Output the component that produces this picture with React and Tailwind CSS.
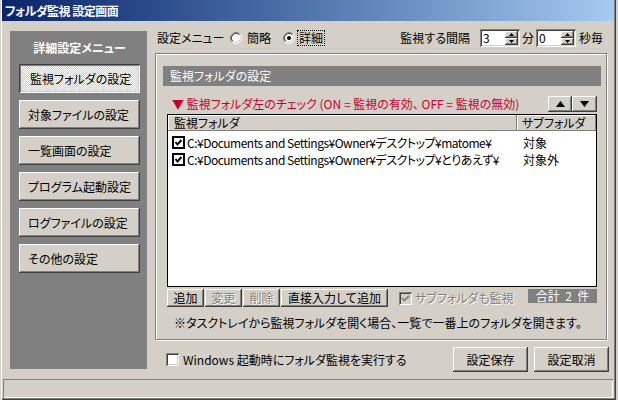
import React from "react";

const raised =
  "bg-[#d4d0c8] shadow-[inset_-1px_-1px_#404040,inset_1px_1px_#fff,inset_-2px_-2px_#808080,inset_2px_2px_#d4d0c8]";
const pressed =
  "bg-[repeating-conic-gradient(#ffffff_0%_25%,#d4d0c8_0%_50%)] bg-[length:2px_2px] shadow-[inset_1px_1px_#404040,inset_-1px_-1px_#fff,inset_2px_2px_#808080,inset_-2px_-2px_#d4d0c8]";
const sunken =
  "shadow-[inset_1px_1px_#808080,inset_-1px_-1px_#fff,inset_2px_2px_#404040,inset_-2px_-2px_#d4d0c8]";
const disabledText = "text-[#808080] [text-shadow:1px_1px_0_#fff]";

function Radio({ checked }) {
  return (
    <svg width="12" height="12" viewBox="0 0 12 12" className="shrink-0">
      <circle cx="6" cy="6" r="4.5" fill="#fff" />
      <path d="M2.11 9.89 A5.5 5.5 0 0 1 9.89 2.11" stroke="#808080" fill="none" />
      <path d="M9.89 2.11 A5.5 5.5 0 0 1 2.11 9.89" stroke="#fff" fill="none" />
      <path d="M2.82 9.18 A4.5 4.5 0 0 1 9.18 2.82" stroke="#404040" fill="none" />
      <path d="M9.18 2.82 A4.5 4.5 0 0 1 2.82 9.18" stroke="#d4d0c8" fill="none" />
      {checked && <circle cx="6" cy="6" r="2" fill="#000" />}
    </svg>
  );
}

function ListCheck() {
  return (
    <svg width="13" height="13" viewBox="0 0 13 13" className="shrink-0">
      <rect x="1" y="1" width="11" height="11" fill="#fff" stroke="#000" strokeWidth="2" />
      <path d="M3.5 6 L5.5 8.5 L9.5 4" stroke="#000" strokeWidth="2" fill="none" />
    </svg>
  );
}

function ClassicCheck({ checked, disabled }) {
  return (
    <div
      className={
        "w-[13px] h-[13px] shrink-0 flex items-center justify-center " +
        sunken +
        (disabled ? " bg-[#d4d0c8]" : " bg-white")
      }
    >
      {checked && (
        <svg width="9" height="9" viewBox="0 0 9 9">
          <path d="M1 4 L3.3 6.5 L8 1.8" stroke={disabled ? "#808080" : "#000"} strokeWidth="1.8" fill="none" />
        </svg>
      )}
    </div>
  );
}

function Spin({ v }) {
  return (
    <div className={"w-[40px] h-[18px] bg-white flex p-[2px] " + sunken}>
      <div className="flex-1 pl-[1px] leading-[14px]">{v}</div>
      <div className="w-[13px] flex flex-col">
        <div className={"h-[7px] flex items-center justify-center " + raised}>
          <svg width="5" height="3" viewBox="0 0 5 3">
            <path d="M2.5 0 L5 3 L0 3 Z" fill="#000" />
          </svg>
        </div>
        <div className={"h-[7px] flex items-center justify-center " + raised}>
          <svg width="5" height="3" viewBox="0 0 5 3">
            <path d="M0 0 L5 0 L2.5 3 Z" fill="#000" />
          </svg>
        </div>
      </div>
    </div>
  );
}

function MenuBtn({ children, active }) {
  return (
    <div
      className={
        "w-[121px] h-[29px] flex items-center " +
        (active ? "pl-[11px] pt-[1px] " + pressed : "pl-[9px] " + raised)
      }
    >
      {children}
    </div>
  );
}

function Btn({ children, w, h, disabled }) {
  return (
    <div
      className={
        "flex items-center justify-center shrink-0 " +
        raised +
        " " +
        w +
        " " +
        h +
        (disabled ? " " + disabledText : "")
      }
    >
      {children}
    </div>
  );
}

export default function App() {
  return (
    <div className="w-[618px] h-[400px] bg-[#d4d0c8] overflow-hidden font-['Noto_Sans_CJK_JP',sans-serif] text-[12px] leading-[14px] text-black [font-feature-settings:'palt']">
      <div className="w-[616px] h-[400px] flex flex-col shadow-[inset_1px_0_#d4d0c8,inset_2px_0_#fff,inset_-1px_-1px_#404040,inset_-2px_-2px_#808080]">
        {/* title bar */}
        <div className="mx-[2px] h-[21px] shrink-0 flex items-center pl-[3px] pt-[1px] bg-gradient-to-r from-[#0a246a] to-[#a6caf0] text-white font-bold tracking-[-0.5px]">
          フォルダ監視 設定画面
        </div>

        {/* main */}
        <div className="h-[351px] shrink-0 flex items-start">
          {/* left menu */}
          <div className="ml-[10px] mt-[10px] w-[137px] h-[338px] bg-[#808080] flex flex-col pl-[9px] pt-[11px]">
            <div className="w-[121px] text-center text-white font-bold h-[12px] leading-[12px]">
              詳細設定メニュー
            </div>
            <div className="mt-[10px] flex flex-col gap-[7px]">
              <MenuBtn active>監視フォルダの設定</MenuBtn>
              <MenuBtn>対象ファイルの設定</MenuBtn>
              <MenuBtn>一覧画面の設定</MenuBtn>
              <MenuBtn>プログラム起動設定</MenuBtn>
              <MenuBtn>ログファイルの設定</MenuBtn>
              <MenuBtn>その他の設定</MenuBtn>
            </div>
          </div>

          {/* right column */}
          <div className="ml-[8px] mt-[8px] w-[454px] flex flex-col">
            {/* top row */}
            <div className="h-[18px] flex items-center">
              <span className="ml-[2px] w-[73px] shrink-0">設定メニュー</span>
              <div className="w-[53px] shrink-0 flex items-center">
                <Radio />
                <span className="ml-[5px]">簡略</span>
              </div>
              <div className="flex items-center">
                <Radio checked />
                <span className="ml-[2px] px-[1px] border border-dotted border-black leading-[14px]">詳細</span>
              </div>
              <div className="ml-auto mr-[6px] flex items-center">
                <span>監視する間隔</span>
                <div className="ml-[10px]">
                  <Spin v="3" />
                </div>
                <span className="w-[16px] text-center">分</span>
                <Spin v="0" />
                <span className="ml-[3px]">秒毎</span>
              </div>
            </div>

            {/* group box */}
            <div className="mt-[6px] w-[452px] h-[287px] border border-[#808080] shadow-[inset_1px_1px_#fff,1px_1px_#fff] flex flex-col">
              <div className="ml-[7px] mt-[12px] w-[438px] h-[20px] bg-[#808080] text-white flex items-center pl-[7px]">
                監視フォルダの設定
              </div>
              <div className="ml-[11px] w-[430px] flex flex-col">
                <div className="mt-[10px] h-[16px] flex items-center">
                  <span className="pl-[5px] text-[#c8002d] whitespace-nowrap">
                    ▼ 監視フォルダ左のチェック (ON = 監視の有効、 OFF = 監視の無効)
                  </span>
                  <div className="ml-auto flex">
                    <div className={"w-[24px] h-[16px] flex items-center justify-center " + raised}>
                      <svg width="9" height="6" viewBox="0 0 9 6">
                        <path d="M4.5 0 L9 6 L0 6 Z" fill="#000" />
                      </svg>
                    </div>
                    <div className={"w-[25px] h-[16px] flex items-center justify-center " + raised}>
                      <svg width="9" height="6" viewBox="0 0 9 6">
                        <path d="M0 0 L9 0 L4.5 6 Z" fill="#000" />
                      </svg>
                    </div>
                  </div>
                </div>

                {/* list */}
                <div className="mt-[2px] h-[173px] border border-black bg-white flex flex-col">
                  <div className="h-[16px] flex bg-[#d4d0c8]">
                    <div className="w-[349px] pl-[6px] flex items-center shadow-[inset_-1px_-1px_#808080,inset_1px_1px_#fff]">
                      監視フォルダ
                    </div>
                    <div className="w-[79px] pl-[5px] flex items-center shadow-[inset_-1px_-1px_#808080,inset_1px_1px_#fff]">
                      サブフォルダ
                    </div>
                  </div>
                  <div className="pt-[3px] flex flex-col">
                    <div className="h-[17px] flex items-center">
                      <div className="w-[349px] flex items-center pl-[4px]">
                        <ListCheck />
                        <span className="ml-[2px] whitespace-nowrap tracking-[-0.5px]">
                          C:¥Documents and Settings¥Owner¥デスクトップ¥matome¥
                        </span>
                      </div>
                      <div className="pl-[6px]">対象</div>
                    </div>
                    <div className="h-[17px] flex items-center">
                      <div className="w-[349px] flex items-center pl-[4px]">
                        <ListCheck />
                        <span className="ml-[2px] whitespace-nowrap tracking-[-0.5px]">
                          C:¥Documents and Settings¥Owner¥デスクトップ¥とりあえず¥
                        </span>
                      </div>
                      <div className="pl-[6px]">対象外</div>
                    </div>
                  </div>
                </div>

                {/* buttons row */}
                <div className="mt-[2px] h-[18px] flex items-start">
                  <Btn w="w-[37px]" h="h-[18px]">追加</Btn>
                  <div className="ml-[1px]">
                    <Btn w="w-[37px]" h="h-[18px]" disabled>変更</Btn>
                  </div>
                  <div className="ml-[1px]">
                    <Btn w="w-[37px]" h="h-[18px]" disabled>削除</Btn>
                  </div>
                  <div className="ml-[1px]">
                    <Btn w="w-[107px]" h="h-[18px]">直接入力して追加</Btn>
                  </div>
                  <div className="ml-[11px] h-[18px] flex items-center">
                    <ClassicCheck checked disabled />
                    <span className={"ml-[3px] " + disabledText}>サブフォルダも監視</span>
                  </div>
                  <div className="ml-auto w-[69px] h-[14px] bg-[#808080] text-white flex items-center justify-center whitespace-pre">
                    合計  2  件
                  </div>
                </div>

                <div className="mt-[9px] pl-[7px]">
                  ※タスクトレイから監視フォルダを開く場合、一覧で一番上のフォルダを開きます。
                </div>
              </div>
            </div>

            {/* bottom row */}
            <div className="mt-[7px] h-[25px] flex items-center">
              <div className="ml-[11px]">
                <ClassicCheck />
              </div>
              <span className="ml-[4px]">Windows 起動時にフォルダ監視を実行する</span>
              <div className="ml-auto flex gap-[6px]">
                <Btn w="w-[75px]" h="h-[25px]">設定保存</Btn>
                <Btn w="w-[75px]" h="h-[25px]">設定取消</Btn>
              </div>
            </div>
          </div>
        </div>

        {/* status bar */}
        <div className="mt-[7px] ml-[3px] w-[610px] h-[19px] shrink-0 shadow-[inset_1px_1px_#808080,inset_-1px_-1px_#fff]" />
      </div>
    </div>
  );
}
